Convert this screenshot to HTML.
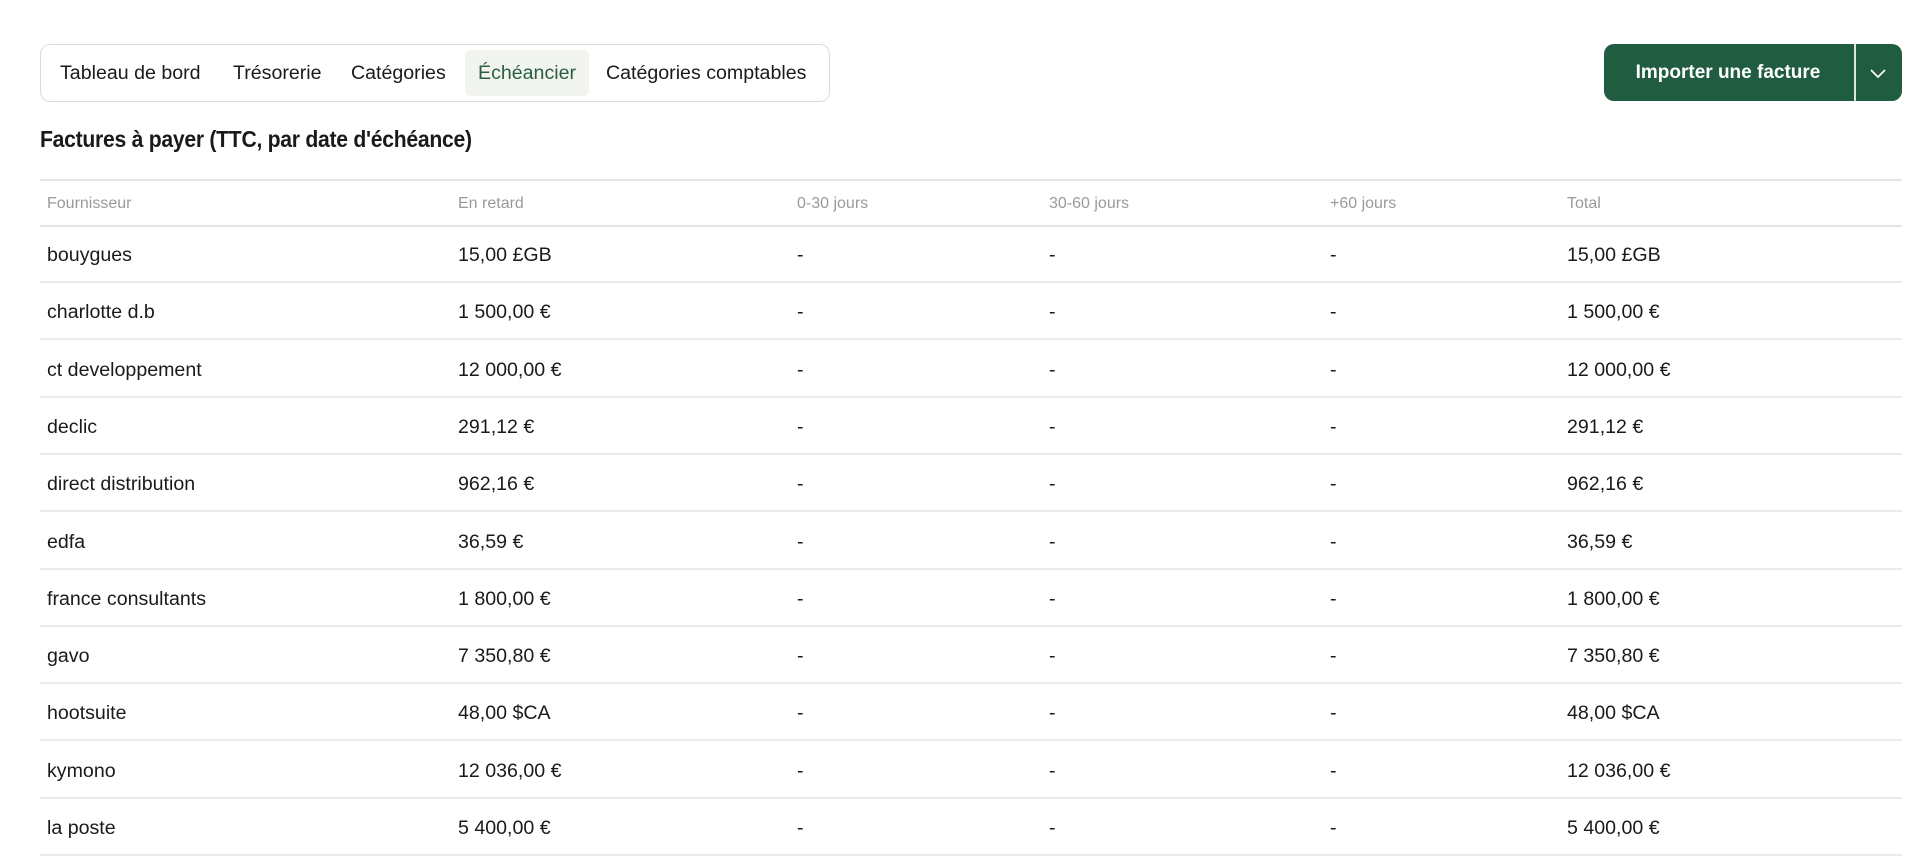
<!DOCTYPE html>
<html><head><meta charset="utf-8"><style>
*{margin:0;padding:0;box-sizing:border-box}
body{width:1920px;height:856px;overflow:hidden;background:#fff;font-family:"Liberation Sans",Arial,sans-serif;color:#1a1a1a;position:relative}
.tabs{position:absolute;left:40px;top:44px;width:790px;height:58px;border:1px solid #dcdcdc;border-radius:10px}
.tab{position:absolute;top:0;height:56px;line-height:57px;font-size:19.6px;color:#1a1a1a;white-space:nowrap}
.active{background:#f2f4ef;color:#2a5e40;border-radius:6px;top:5px;height:46px;line-height:47px;padding:0 13px}
.btn{position:absolute;left:1604px;top:44px;width:298px;height:57px;background:#1f5c40;border-radius:10px;color:#fff}
.btn .t{position:absolute;left:0;width:248px;text-align:center;line-height:57px;font-weight:bold;font-size:19px}
.btn .d{position:absolute;left:250px;top:0;width:2px;height:57px;background:#fff;opacity:.85}
h1{position:absolute;left:40px;top:126px;font-size:23px;font-weight:bold;letter-spacing:-0.3px;transform:scaleX(0.92);transform-origin:left}
.line{position:absolute;left:40px;width:1862px;height:2px;background:#ecebe6}
.row{position:absolute;left:0;width:1920px;font-size:19.6px}
.row span{position:absolute;white-space:nowrap}
.hd{color:#9a9a9a;font-size:16px}
</style></head><body>
<div class="tabs">
<div class="tab" style="left:19px">Tableau de bord</div>
<div class="tab" style="left:192px">Trésorerie</div>
<div class="tab" style="left:310px">Catégories</div>
<div class="tab active" style="left:424px">Échéancier</div>
<div class="tab" style="left:565px">Catégories comptables</div>
</div>
<div class="btn"><div class="t">Importer une facture</div><div class="d"></div>
<svg style="position:absolute;left:265px;top:20px" width="18" height="18" viewBox="0 0 18 18"><path d="M2 6l7 7 7-7" stroke="#fff" stroke-width="1.8" fill="none"/></svg></div>
<h1>Factures à payer (TTC, par date d'échéance)</h1>
<div class="line" style="top:179px;background:#e3e8e6"></div>
<div class="row hd" style="top:195px">
<span style="left:47px">Fournisseur</span><span style="left:458px">En retard</span><span style="left:797px">0-30 jours</span><span style="left:1049px">30-60 jours</span><span style="left:1330px">+60 jours</span><span style="left:1567px">Total</span></div>
<div class="line" style="top:225px;background:#e0e6e4"></div>
<div id="rows"></div>
<script>
var d=[["bouygues","15,00 £GB"],["charlotte d.b","1 500,00 €"],["ct developpement","12 000,00 €"],["declic","291,12 €"],["direct distribution","962,16 €"],["edfa","36,59 €"],["france consultants","1 800,00 €"],["gavo","7 350,80 €"],["hootsuite","48,00 $CA"],["kymono","12 036,00 €"],["la poste","5 400,00 €"]];
var h="";
d.forEach(function(r,i){var c=253+i*57.3;
h+='<div class="row" style="top:'+(c-9)+'px"><span style="left:47px">'+r[0]+'</span><span style="left:458px">'+r[1]+'</span><span style="left:797px">-</span><span style="left:1049px">-</span><span style="left:1330px">-</span><span style="left:1567px">'+r[1]+'</span></div>';
h+='<div class="line" style="top:'+Math.round(c+28)+'px"></div>';});
document.getElementById("rows").innerHTML=h;
</script>
</body></html>
